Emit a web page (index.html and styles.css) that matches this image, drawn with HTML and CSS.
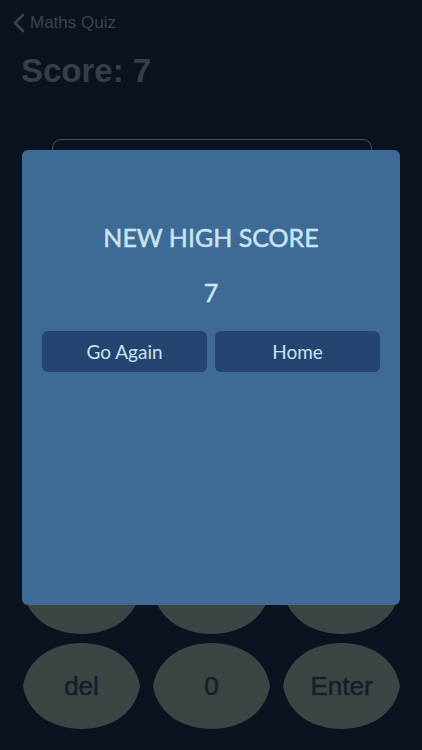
FILE: index.html
```html
<!DOCTYPE html>
<html>
<head>
<meta charset="utf-8">
<link rel="stylesheet" href="styles.css">
</head>
<body>
<div class="screen">
  <div class="nav">
    <svg class="chev" width="14" height="20" viewBox="0 0 14 20"><path d="M11 2 L3 10 L11 18" fill="none" stroke="#3a424d" stroke-width="2.6" stroke-linecap="round" stroke-linejoin="round"/></svg>
    <span class="back">Maths Quiz</span>
  </div>
  <h1 class="score">Score: 7</h1>
  <div class="field"></div>
  <div class="keypad">
    <div class="key">1</div><div class="key">2</div><div class="key">3</div>
    <div class="key">4</div><div class="key">5</div><div class="key">6</div>
    <div class="key">7</div><div class="key">8</div><div class="key">9</div>
    <div class="key">del</div><div class="key">0</div><div class="key">Enter</div>
  </div>
  <div class="modal">
    <div class="title">NEW HIGH SCORE</div>
    <div class="value">7</div>
    <div class="actions">
      <div class="btn">Go Again</div>
      <div class="btn">Home</div>
    </div>
  </div>
</div>
</body>
</html>
```
FILE: styles.css
```css
html, body {
  margin: 0;
  padding: 0;
  background: #0c1320;
}
.screen {
  position: relative;
  width: 422px;
  height: 750px;
  display: flex;
  flex-direction: column;
  font-family: "Liberation Sans", Arial, sans-serif;
  overflow: hidden;
}
.nav {
  display: flex;
  align-items: center;
  height: 20px;
  margin-top: 13px;
  padding-left: 12px;
  gap: 4px;
}
.back {
  font-size: 17px;
  color: #3a424d;
}
.score {
  margin: 19px 0 0 21px;
  font-size: 33px;
  font-weight: bold;
  color: #373e47;
  line-height: 38px;
}
.field {
  margin: 49px 0 0 52px;
  width: 318px;
  height: 46px;
  border: 1.5px solid #4b5058;
  border-radius: 9px;
}
.keypad {
  margin-top: auto;
  padding: 0 22px 21px 22px;
  display: grid;
  grid-template-columns: repeat(3, 119px);
  column-gap: 11px;
  row-gap: 9px;
}
.key {
  height: 86px;
  background: #3c4444;
  clip-path: path('M1 43 C6 14 32 0 59.5 0 C87 0 113 14 118 43 C113 72 87 86 59.5 86 C32 86 6 72 1 43 Z');
  display: flex;
  align-items: center;
  justify-content: center;
  font-family: "Liberation Sans", Arial, sans-serif;
  font-size: 26px;
  color: #161e2b;
  -webkit-text-stroke: 0.5px #161e2b;
}
.modal {
  position: absolute;
  left: 22px;
  top: 150px;
  width: 378px;
  height: 455px;
  background: #3e6b96;
  border-radius: 6px;
  box-sizing: border-box;
  padding: 72px 20px 0 20px;
  display: flex;
  flex-direction: column;
  align-items: center;
  font-family: Lato, "Noto Sans", sans-serif;
  color: #c6e5f0;
}
.title {
  font-size: 25px;
  line-height: 30px;
  -webkit-text-stroke: 0.5px #c6e5f0;
}
.value {
  margin-top: 25px;
  font-size: 25px;
  line-height: 30px;
  -webkit-text-stroke: 0.5px #c6e5f0;
}
.actions {
  margin-top: 24px;
  display: flex;
  gap: 8px;
  width: 100%;
}
.btn {
  flex: 1;
  height: 41px;
  background: #25446f;
  border-radius: 6px;
  display: flex;
  align-items: center;
  justify-content: center;
  font-size: 19px;
  color: #c6e5f0;
}
```
